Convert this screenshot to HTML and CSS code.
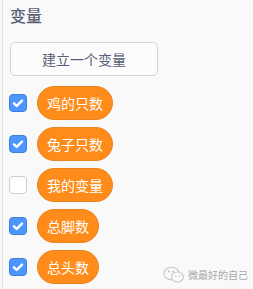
FILE: index.html
```html
<!DOCTYPE html>
<html>
<head>
<meta charset="utf-8">
<link rel="stylesheet" href="styles.css">
</head>
<body>
<div class="panel">
  <div class="title">变量</div>
  <div class="make-btn">建立一个变量</div>
  <div class="list">
    <div class="row"><span class="cb checked"><svg viewBox="0 0 18 18" width="18" height="18"><path d="M5 9.3l2.7 2.6L13 6.6" fill="none" stroke="#fff" stroke-width="2.4" stroke-linecap="round" stroke-linejoin="round"/></svg></span><span class="pill">鸡的只数</span></div>
    <div class="row"><span class="cb checked"><svg viewBox="0 0 18 18" width="18" height="18"><path d="M5 9.3l2.7 2.6L13 6.6" fill="none" stroke="#fff" stroke-width="2.4" stroke-linecap="round" stroke-linejoin="round"/></svg></span><span class="pill">兔子只数</span></div>
    <div class="row"><span class="cb"></span><span class="pill">我的变量</span></div>
    <div class="row"><span class="cb checked"><svg viewBox="0 0 18 18" width="18" height="18"><path d="M5 9.3l2.7 2.6L13 6.6" fill="none" stroke="#fff" stroke-width="2.4" stroke-linecap="round" stroke-linejoin="round"/></svg></span><span class="pill">总脚数</span></div>
    <div class="row"><span class="cb checked"><svg viewBox="0 0 18 18" width="18" height="18"><path d="M5 9.3l2.7 2.6L13 6.6" fill="none" stroke="#fff" stroke-width="2.4" stroke-linecap="round" stroke-linejoin="round"/></svg></span><span class="pill">总头数</span></div>
  </div>
  <div class="watermark">
    <svg class="wx" viewBox="0 0 22 18" width="22" height="18"><ellipse cx="8.5" cy="7.5" rx="7.5" ry="6.3" fill="none" stroke="#c8c8c8" stroke-width="1.1"/><ellipse cx="14.5" cy="11" rx="6" ry="5" fill="#fbfbfb" stroke="#c8c8c8" stroke-width="1.1"/><circle cx="6" cy="5.5" r="0.9" fill="#bbb"/><circle cx="10.5" cy="5.5" r="0.9" fill="#bbb"/><circle cx="12.6" cy="10" r="0.8" fill="#bbb"/><circle cx="16.4" cy="10" r="0.8" fill="#bbb"/></svg>
    <span class="wm-text">微最好的自己</span>
  </div>
</div>
</body>
</html>
```

FILE: styles.css
```css
html, body {
  margin: 0;
  padding: 0;
  background: #f9f9f9;
}
body {
  font-family: "Noto Sans CJK SC", "Noto Sans", sans-serif;
  width: 253px;
  height: 289px;
  overflow: hidden;
}
.panel {
  position: relative;
  margin-left: 2px;
  height: 289px;
  border-left: 1px solid #e2e2e2;
  padding-left: 7px;
  box-sizing: border-box;
}
.title {
  padding-top: 4px;
  font-size: 16px;
  line-height: 22px;
  font-weight: 500;
  color: #575e75;
}
.make-btn {
  margin-top: 16px;
  width: 148px;
  height: 34px;
  box-sizing: border-box;
  border: 1px solid #d3d3d3;
  border-radius: 5px;
  background: #fcfcfc;
  color: #575e75;
  font-size: 14px;
  display: flex;
  align-items: center;
  justify-content: center;
}
.list {
  margin-top: 10px;
  display: flex;
  flex-direction: column;
  gap: 7px;
}
.row {
  display: flex;
  align-items: center;
  gap: 10px;
  margin-left: -1px;
}
.cb {
  width: 18px;
  height: 18px;
  box-sizing: border-box;
  border: 1px solid #cfcfcf;
  border-radius: 4px;
  background: #fff;
  display: flex;
  align-items: center;
  justify-content: center;
}
.cb.checked {
  background: #4c97ff;
  border-color: #3d7fd8;
}
.cb svg {
  display: block;
  margin: -1px;
}
.pill {
  height: 34px;
  box-sizing: border-box;
  padding: 0 9px;
  border: 1px solid #e9851f;
  border-radius: 17px;
  background: #ff8c1a;
  color: #fff;
  font-size: 14px;
  display: flex;
  align-items: center;
}
.watermark {
  position: absolute;
  left: 160px;
  top: 266px;
  display: flex;
  align-items: center;
  gap: 3px;
  color: #a8a8a8;
  font-size: 10px;
  white-space: nowrap;
}
.wm-text {
  line-height: 18px;
}
.wx {
  display: block;
}
```
